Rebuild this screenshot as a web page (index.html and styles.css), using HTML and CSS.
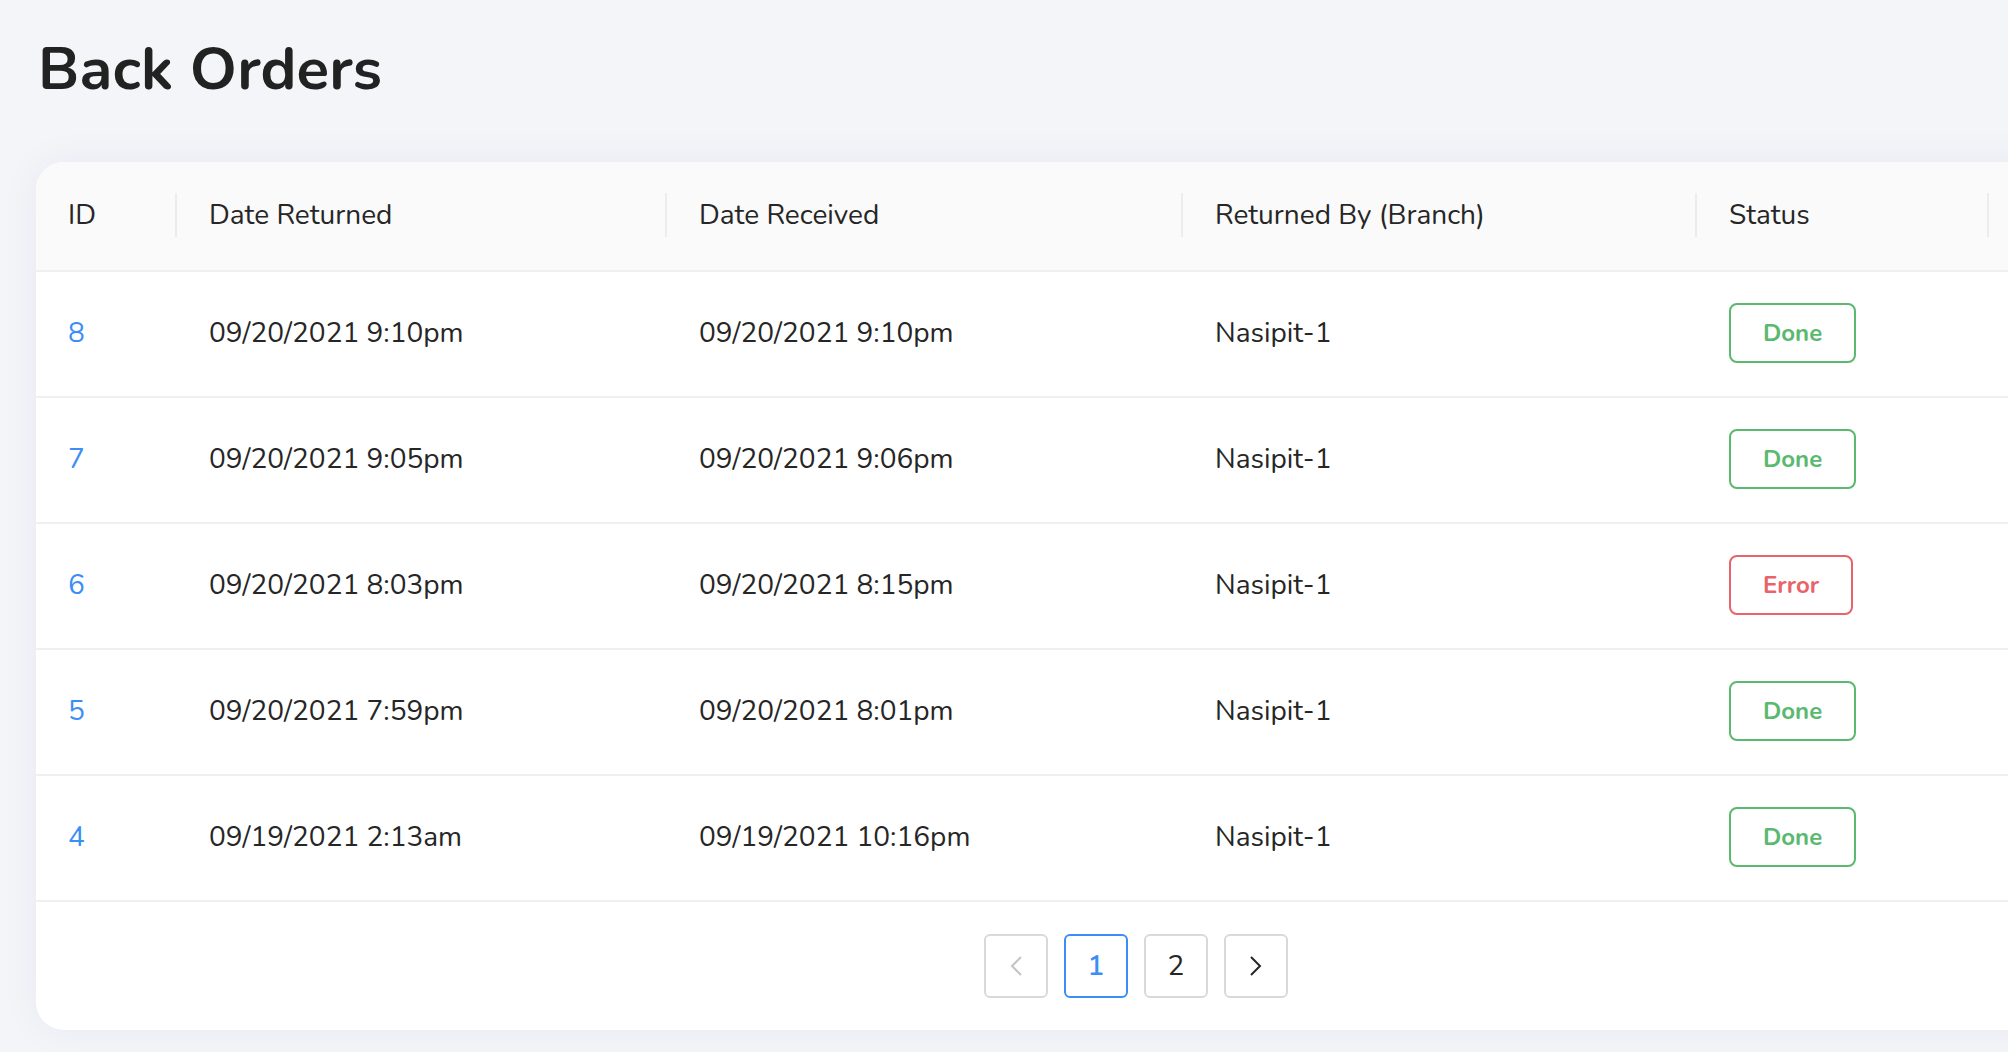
FILE: index.html
```html
<!DOCTYPE html>
<html lang="en">
<head>
<meta charset="utf-8">
<title>Back Orders</title>
<link rel="stylesheet" href="styles.css">
</head>
<body>
<main class="page">
  <h1 class="title">Back Orders</h1>
  <section class="card">
    <div class="row head">
      <div class="cell th">ID</div>
      <div class="cell th">Date Returned</div>
      <div class="cell th">Date Received</div>
      <div class="cell th">Returned By (Branch)</div>
      <div class="cell th">Status</div>
      <div class="cell th last"></div>
    </div>
    <div class="row">
      <div class="cell"><a class="link" href="#">8</a></div>
      <div class="cell">09/20/2021 9:10pm</div>
      <div class="cell">09/20/2021 9:10pm</div>
      <div class="cell">Nasipit-1</div>
      <div class="cell"><span class="tag done">Done</span></div>
      <div class="cell"></div>
    </div>
    <div class="row">
      <div class="cell"><a class="link" href="#">7</a></div>
      <div class="cell">09/20/2021 9:05pm</div>
      <div class="cell">09/20/2021 9:06pm</div>
      <div class="cell">Nasipit-1</div>
      <div class="cell"><span class="tag done">Done</span></div>
      <div class="cell"></div>
    </div>
    <div class="row">
      <div class="cell"><a class="link" href="#">6</a></div>
      <div class="cell">09/20/2021 8:03pm</div>
      <div class="cell">09/20/2021 8:15pm</div>
      <div class="cell">Nasipit-1</div>
      <div class="cell"><span class="tag error">Error</span></div>
      <div class="cell"></div>
    </div>
    <div class="row">
      <div class="cell"><a class="link" href="#">5</a></div>
      <div class="cell">09/20/2021 7:59pm</div>
      <div class="cell">09/20/2021 8:01pm</div>
      <div class="cell">Nasipit-1</div>
      <div class="cell"><span class="tag done">Done</span></div>
      <div class="cell"></div>
    </div>
    <div class="row">
      <div class="cell"><a class="link" href="#">4</a></div>
      <div class="cell">09/19/2021 2:13am</div>
      <div class="cell">09/19/2021 10:16pm</div>
      <div class="cell">Nasipit-1</div>
      <div class="cell"><span class="tag done">Done</span></div>
      <div class="cell"></div>
    </div>
    <nav class="pager">
      <span class="pg disabled"><svg width="16" height="22" viewBox="0 0 16 22"><path d="M13 2 L4 11 L13 20" fill="none" stroke="currentColor" stroke-width="2"/></svg></span>
      <span class="pg active">1</span>
      <span class="pg">2</span>
      <span class="pg"><svg width="16" height="22" viewBox="0 0 16 22"><path d="M3 2 L12 11 L3 20" fill="none" stroke="currentColor" stroke-width="2"/></svg></span>
    </nav>
  </section>
</main>
</body>
</html>
```
FILE: styles.css
```css
html, body {
  margin: 0;
  padding: 0;
  overflow: hidden;
}
body {
  background: #f4f5f9;
  font-family: "Nunito", Lato, "Noto Sans", sans-serif;
  color: #262626;
  width: 2008px;
  height: 1052px;
}
.page {
  padding: 0 0 0 36px;
  display: flex;
  flex-direction: column;
  align-items: flex-start;
}
.title {
  margin: 33px 0 0 2px;
  font-size: 60px;
  font-weight: 700;
  line-height: 72px;
  color: #222;
  letter-spacing: 0.2px;
}
.card {
  margin-top: 57px;
  width: 2200px;
  flex-shrink: 0;
  background: #fff;
  border-radius: 28px;
  overflow: hidden;
  box-shadow: 0 0 40px rgba(30, 40, 80, 0.05);
}
.row {
  display: grid;
  grid-template-columns: 141px 490px 516px 514px 292px 247px;
  height: 126px;
  box-sizing: border-box;
  border-bottom: 2px solid #f0f0f0;
  align-items: center;
  font-size: 28px;
}
.row.head {
  height: 110px;
  background: #fafafa;
}
.cell {
  padding: 0 32px;
  position: relative;
  height: 100%;
  display: flex;
  align-items: center;
  white-space: nowrap;
  margin-top: -2px;
}
.th::after {
  content: "";
  position: absolute;
  right: 0;
  top: 50%;
  width: 2px;
  height: 44px;
  margin-top: -22px;
  background: #ececec;
}
.th.last::after {
  display: none;
}
.link {
  color: #3a8ef6;
  text-decoration: none;
}
.tag {
  display: inline-flex;
  align-items: center;
  justify-content: center;
  box-sizing: border-box;
  height: 60px;
  padding: 0 32px;
  border: 2px solid;
  border-radius: 8px;
  font-size: 24px;
  font-weight: 700;
}
.tag.done {
  color: #5ab96f;
  border-color: #5ab96f;
}
.tag.error {
  color: #e8636a;
  border-color: #e8636a;
}
.pager {
  display: flex;
  justify-content: center;
  gap: 16px;
  padding: 32px 0;
}
.pg {
  width: 64px;
  height: 64px;
  box-sizing: border-box;
  border: 2px solid #d9d9d9;
  border-radius: 6px;
  display: flex;
  align-items: center;
  justify-content: center;
  font-size: 28px;
  color: #262626;
}
.pg.active {
  border-color: #3a8ef6;
  color: #3a8ef6;
  font-weight: 600;
}
.pg.disabled {
  color: #c4c4c4;
}
```
